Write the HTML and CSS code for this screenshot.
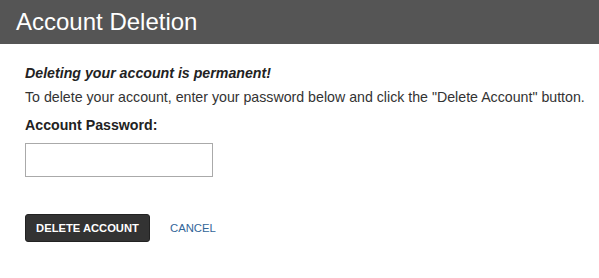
FILE: index.html
```html
<!DOCTYPE html>
<html lang="en">
<head>
<meta charset="utf-8">
<title>Account Deletion</title>
<link rel="stylesheet" href="styles.css">
</head>
<body>
<header class="page-header">
  <h1 class="page-title">Account Deletion</h1>
</header>
<main class="content">
  <p class="warning">Deleting your account is permanent!</p>
  <p class="instructions">To delete your account, enter your password below and click the "Delete Account" button.</p>
  <form class="delete-form">
    <label class="field-label" for="password">Account Password:</label>
    <input class="field-input" id="password" type="password">
    <div class="actions">
      <button class="btn-delete" type="button">DELETE ACCOUNT</button>
      <a class="link-cancel" href="#">CANCEL</a>
    </div>
  </form>
</main>
</body>
</html>
```

FILE: styles.css
```css
* { box-sizing: border-box; }
html, body {
  margin: 0;
  padding: 0;
  background: #fff;
  font-family: "Liberation Sans", Arial, sans-serif;
  color: #333;
}
.page-header {
  background: #555555;
  height: 44px;
  padding: 0 16px;
}
.page-title {
  margin: 0;
  font-size: 24px;
  font-weight: normal;
  line-height: 44px;
  color: #fff;
}
.content {
  padding: 20px 0 0 25px;
}
.warning {
  margin: 0;
  font-size: 14.2px;
  line-height: 18px;
  font-weight: bold;
  font-style: italic;
  color: #222;
}
.instructions {
  margin: 6px 0 0;
  font-size: 14.2px;
  line-height: 18px;
  color: #333;
  white-space: nowrap;
}
.delete-form {
  display: flex;
  flex-direction: column;
  align-items: flex-start;
}
.field-label {
  margin-top: 10px;
  font-size: 14.2px;
  line-height: 18px;
  font-weight: bold;
  color: #222;
}
.field-input {
  margin-top: 9px;
  width: 188px;
  height: 34px;
  border: 1px solid #aaa;
  border-radius: 0;
  padding: 4px 6px;
  font: inherit;
}
.actions {
  margin-top: 37px;
  display: flex;
  align-items: center;
  gap: 20px;
}
.btn-delete {
  width: 125px;
  height: 28px;
  background: #333;
  border: 1px solid #222;
  border-radius: 3px;
  color: #fff;
  font-family: "Liberation Sans", Arial, sans-serif;
  font-weight: bold;
  font-size: 11.2px;
  padding: 0;
}
.link-cancel {
  color: #336699;
  font-size: 11.3px;
  text-decoration: none;
}
```
